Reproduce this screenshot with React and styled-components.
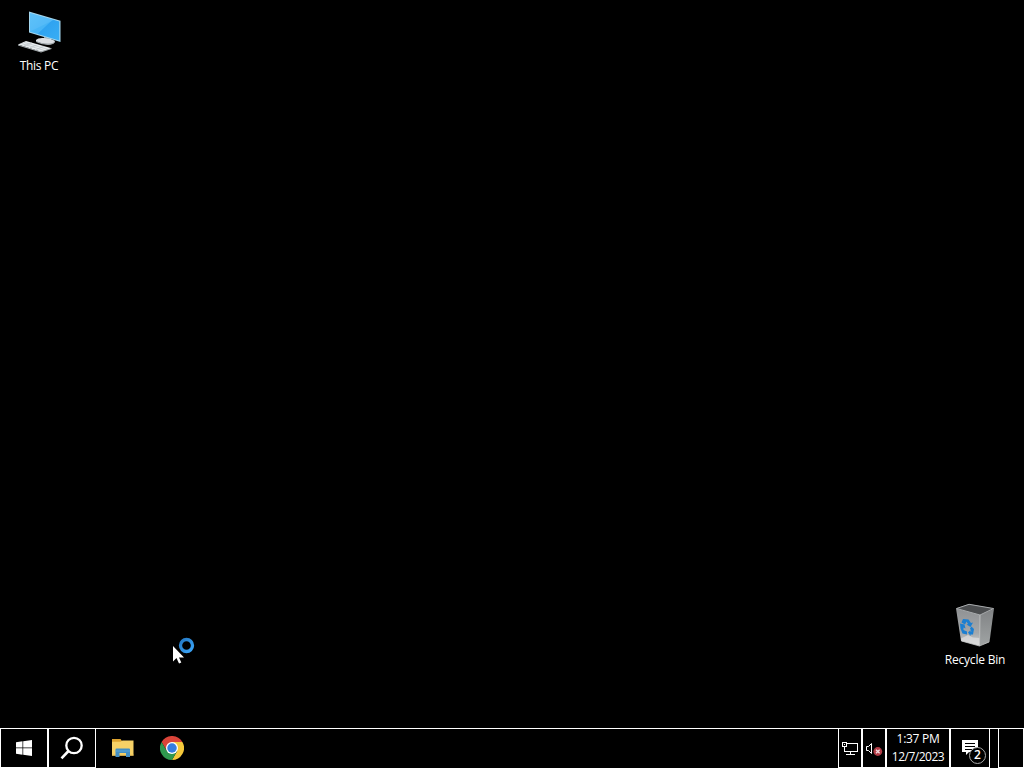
import React from "react";
import styled, { createGlobalStyle } from "styled-components";

export default function App() {
  return (
    <>
      <GlobalStyle />
      <Screen>
        <Desktop>
          <Shortcut $left={1} $top={10}>
            <ComputerIcon />
            <Label $spacing="-0.3px">This PC</Label>
          </Shortcut>
          <Shortcut $left={937} $top={603}>
            <BinIcon />
            <Label $spacing="-0.2px" $drop={1}>
              Recycle Bin
            </Label>
          </Shortcut>
          <Cursor>
            <PointerIcon />
          </Cursor>
        </Desktop>
        <Taskbar>
          <Cell $width={48}>
            <WindowsIcon />
          </Cell>
          <Cell $width={48}>
            <SearchIcon />
          </Cell>
          <Pinned>
            <FolderIcon />
            <ChromeIcon />
          </Pinned>
          <Cell $width={24}>
            <NetworkIcon />
          </Cell>
          <Cell $width={24}>
            <VolumeIcon />
          </Cell>
          <Clock $width={64}>
            <Time $spacing="-0.3px">1:37 PM</Time>
            <Time $spacing="-0.5px">12/7/2023</Time>
          </Clock>
          <Cell $width={40}>
            <ActionCenter>
              <NoteIcon />
              <Badge>2</Badge>
            </ActionCenter>
          </Cell>
          <Gap />
          <Cell $width={26} />
        </Taskbar>
      </Screen>
    </>
  );
}

function ComputerIcon() {
  return (
    <svg width="48" height="46" viewBox="0 0 48 46">
      <defs>
        <linearGradient id="monitor" x1="0" y1="0" x2="1" y2="1">
          <stop offset="0" stopColor="#58c0f8" />
          <stop offset="0.5" stopColor="#46b4f6" />
          <stop offset="0.52" stopColor="#2fa3f0" />
          <stop offset="1" stopColor="#38aef5" />
        </linearGradient>
      </defs>
      <path d="M29 25L36 27.500V31L29 30Z" fill="#8d979c" />
      <path d="M21 30Q23 27.500 29 28Q37 28.500 40 31Q40 34 34 34.500Q29 34.500 21 31.500Z" fill="#dcdfe3" />
      <path d="M21 31Q28 34 34 33.500Q39 33 40 31V32Q38 35 33 35Q27 35 21 32Z" fill="#9fa7ab" />
      <path d="M14 1.500L45.500 10.800V32L14 22.500Z" fill="#a4d6ee" />
      <path d="M15 2.900L44.300 11.600V30.500L15 21.700Z" fill="url(#monitor)" />
      <path d="M15 2.900L39 10L15 21.500Z" fill="#72c8fb" opacity="0.3" />
      <path d="M11 31L36.500 38.200L26 41.800L3 34.500Z" fill="#e9edef" />
      <path d="M3 34.500L26 41.500L36.500 38.200V39L26 42.600L3 35.500Z" fill="#a9b0b3" />
      <path d="M9 32.400L33 39.400M6 33.400L29.500 40.500M17 32.800L9 36M23 34.500L15 37.800M29 36.200L21 39.700" stroke="#b6bec2" strokeWidth="0.600" />
    </svg>
  );
}

function BinIcon() {
  return (
    <svg width="48" height="46" viewBox="0 0 48 46">
      <defs>
        <linearGradient id="binLeft" x1="0" y1="0" x2="0" y2="1">
          <stop offset="0" stopColor="#8f9193" />
          <stop offset="0.65" stopColor="#a4a7aa" />
          <stop offset="1" stopColor="#d2d2d1" />
        </linearGradient>
        <linearGradient id="binRight" x1="0" y1="0" x2="0" y2="1">
          <stop offset="0" stopColor="#808284" />
          <stop offset="1" stopColor="#a0a4a4" />
        </linearGradient>
      </defs>
      <path d="M5 5.500L18 1L43 5.500L29 12.500Z" fill="#4b4d4f" />
      <path d="M5 5.500L29 12V43L10 38Z" fill="url(#binLeft)" />
      <path d="M29 12L43 5.500L38.500 39L28 43Z" fill="url(#binRight)" />
      <path d="M10 35.500L17 32L22 34.500L28.500 35V42.500L10.500 38Z" fill="#e0e0df" opacity="0.7" />
      <path d="M5.500 5.500L18 1.300L42.500 5.500L29 12Z" fill="none" stroke="#a8abad" strokeWidth="1" />
      <path d="M29 12L28.500 42.500M10.500 38L28.500 43L38 39" fill="none" stroke="#c7c8c8" strokeWidth="0.800" />
      <g fill="#1b7fd2">
        <path d="M12 16L17.500 16.500L20 20L22 19.500L19.500 24L15.500 21.500L17 21L15.500 18.500L14 21.500L10.500 19.500Z" />
        <path d="M9 20.500L13.500 21.500L14.500 25.500L12.500 24.500L12.500 27L16 28.500V31.500L11.500 30.500L9.500 25.500Z" />
        <path d="M20.500 23.500L23 26L22 31.500H19.500V33L17 29.500L19.500 27V28.500H20.500L19 25.500Z" />
      </g>
    </svg>
  );
}

function PointerIcon() {
  return (
    <svg width="24" height="28" viewBox="0 0 24 28">
      <defs>
        <linearGradient id="busy" x1="0" y1="0" x2="1" y2="1">
          <stop offset="0" stopColor="#2479c4" />
          <stop offset="1" stopColor="#3ba5f8" />
        </linearGradient>
      </defs>
      <circle cx="14.500" cy="8.500" r="6" fill="none" stroke="url(#busy)" strokeWidth="3.300" />
      <path d="M1 9V24.500L4.500 21L7 26.500L9.300 25.500L7 20.500H12Z" fill="#fff" />
    </svg>
  );
}

function WindowsIcon() {
  return (
    <svg width="16" height="16" viewBox="0 0 16 16" fill="#fff">
      <path d="M0 2.200L6.500 1.300V7.500H0ZM7.200 1.150L16 0V7.500H7.200ZM0 8.300H6.500V14.700L0 13.800ZM7.200 8.300H16V16L7.200 14.850Z" />
    </svg>
  );
}

function SearchIcon() {
  return (
    <svg width="24" height="24" viewBox="0 0 24 24" fill="none" stroke="#fff" strokeWidth="2.300">
      <circle cx="14" cy="9.500" r="7.700" />
      <path d="M8.500 15L1.500 22.300" strokeWidth="2.600" />
    </svg>
  );
}

function FolderIcon() {
  return (
    <svg width="24" height="24" viewBox="0 0 24 24">
      <path d="M1 3H9.500L11 5H22V10H1Z" fill="#dda32f" />
      <path d="M1 5.800H9.500L11.500 4.500H22.500V19.500H1Z" fill="#f6d166" />
      <path d="M1 18.500H22.500V19.700H1Z" fill="#eac05a" />
      <path d="M4.500 13.500Q4.500 12.500 5.500 12.500H18Q19 12.500 19 13.500V21H15V17H8.500V21H4.500Z" fill="#438fc4" />
      <path d="M4.500 14.500H19V15.500H4.500Z" fill="#5aa7d8" />
    </svg>
  );
}

function ChromeIcon() {
  return (
    <svg width="24" height="24" viewBox="0 0 48 48">
      <path d="M24 12H44.800A24 24 0 0 1 24 48L34.400 30Z" fill="#f5c83b" />
      <path d="M13.600 30L3.200 12A24 24 0 0 1 44.800 12H24Z" fill="#da4439" />
      <path d="M34.400 30L24 48A24 24 0 0 1 3.200 12L13.600 30Z" fill="#2f984e" />
      <circle cx="24" cy="24" r="12" fill="#fff" />
      <circle cx="24" cy="24" r="9.500" fill="#347de0" />
    </svg>
  );
}

function NetworkIcon() {
  return (
    <svg width="18" height="16" viewBox="0 0 18 16" fill="none" stroke="#fff" shapeRendering="crispEdges">
      <path d="M5.500 3.500H16.500V11.500H3.500V6.500M9.500 11.500V14.500M5 14.500H14" />
      <path d="M1.500 2.500H5.500V6.500H1.500ZM3 4.500H4" />
    </svg>
  );
}

function VolumeIcon() {
  return (
    <svg width="18" height="16" viewBox="0 0 18 16" fill="none">
      <path d="M1.500 6.500H3.500L6.500 3.500V13.500L3.500 10.500H1.500Z" stroke="#fff" />
      <circle cx="12.800" cy="11.500" r="4.400" fill="#b23c46" />
      <path d="M11 9.700L14.600 13.300M14.600 9.700L11 13.300" stroke="#f5dce0" strokeWidth="1.300" />
    </svg>
  );
}

function NoteIcon() {
  return (
    <svg width="16" height="16" viewBox="0 0 16 16">
      <path d="M0 0H16V12H7L4 15V12H0Z" fill="#fff" />
      <path d="M3 3.500H13M3 6.500H13M3 9.500H10" stroke="#000" />
    </svg>
  );
}

const GlobalStyle = createGlobalStyle`
  * {
    box-sizing: border-box;
  }
  body {
    margin: 0;
    background: #000;
    overflow: hidden;
  }
  svg {
    display: block;
    flex-shrink: 0;
  }
`;

const Screen = styled.div`
  width: 1024px;
  height: 768px;
  display: flex;
  flex-direction: column;
  background: #000;
  color: #fff;
  font-family: "Open Sans", "Noto Sans", sans-serif;
  font-size: 12px;
  cursor: default;
`;

const Desktop = styled.main`
  position: relative;
  flex: 1;
`;

const Shortcut = styled.div`
  position: absolute;
  left: ${({ $left }) => $left}px;
  top: ${({ $top }) => $top}px;
  width: 76px;
  display: flex;
  flex-direction: column;
  align-items: center;
  gap: 2px;
`;

const Label = styled.span`
  padding-top: ${({ $drop }) => $drop || 0}px;
  line-height: 16px;
  white-space: nowrap;
  letter-spacing: ${({ $spacing }) => $spacing};
`;

const Cursor = styled.div`
  position: absolute;
  left: 172px;
  top: 637px;
`;

const Taskbar = styled.footer`
  height: 40px;
  display: flex;
  border-top: 1px solid #fff;
`;

const Cell = styled.div`
  width: ${({ $width }) => $width}px;
  flex-shrink: 0;
  display: flex;
  align-items: center;
  justify-content: center;
  border: 1px solid #fff;
  border-top: none;
`;

const Pinned = styled.div`
  flex: 1;
  display: flex;
  align-items: center;
  gap: 25px;
  padding: 0 0 1px 15px;
`;

const Clock = styled(Cell)`
  flex-direction: column;
`;

const Time = styled.span`
  line-height: 18px;
  white-space: nowrap;
  letter-spacing: ${({ $spacing }) => $spacing};
`;

const ActionCenter = styled.div`
  position: relative;
  width: 16px;
  height: 16px;
`;

const Badge = styled.span`
  position: absolute;
  left: 7px;
  top: 7px;
  width: 17px;
  height: 17px;
  border: 1px solid #aaa;
  border-radius: 50%;
  background: #000;
  font-size: 12px;
  font-weight: 600;
  line-height: 14px;
  text-align: center;
`;

const Gap = styled.div`
  width: 8px;
`;
